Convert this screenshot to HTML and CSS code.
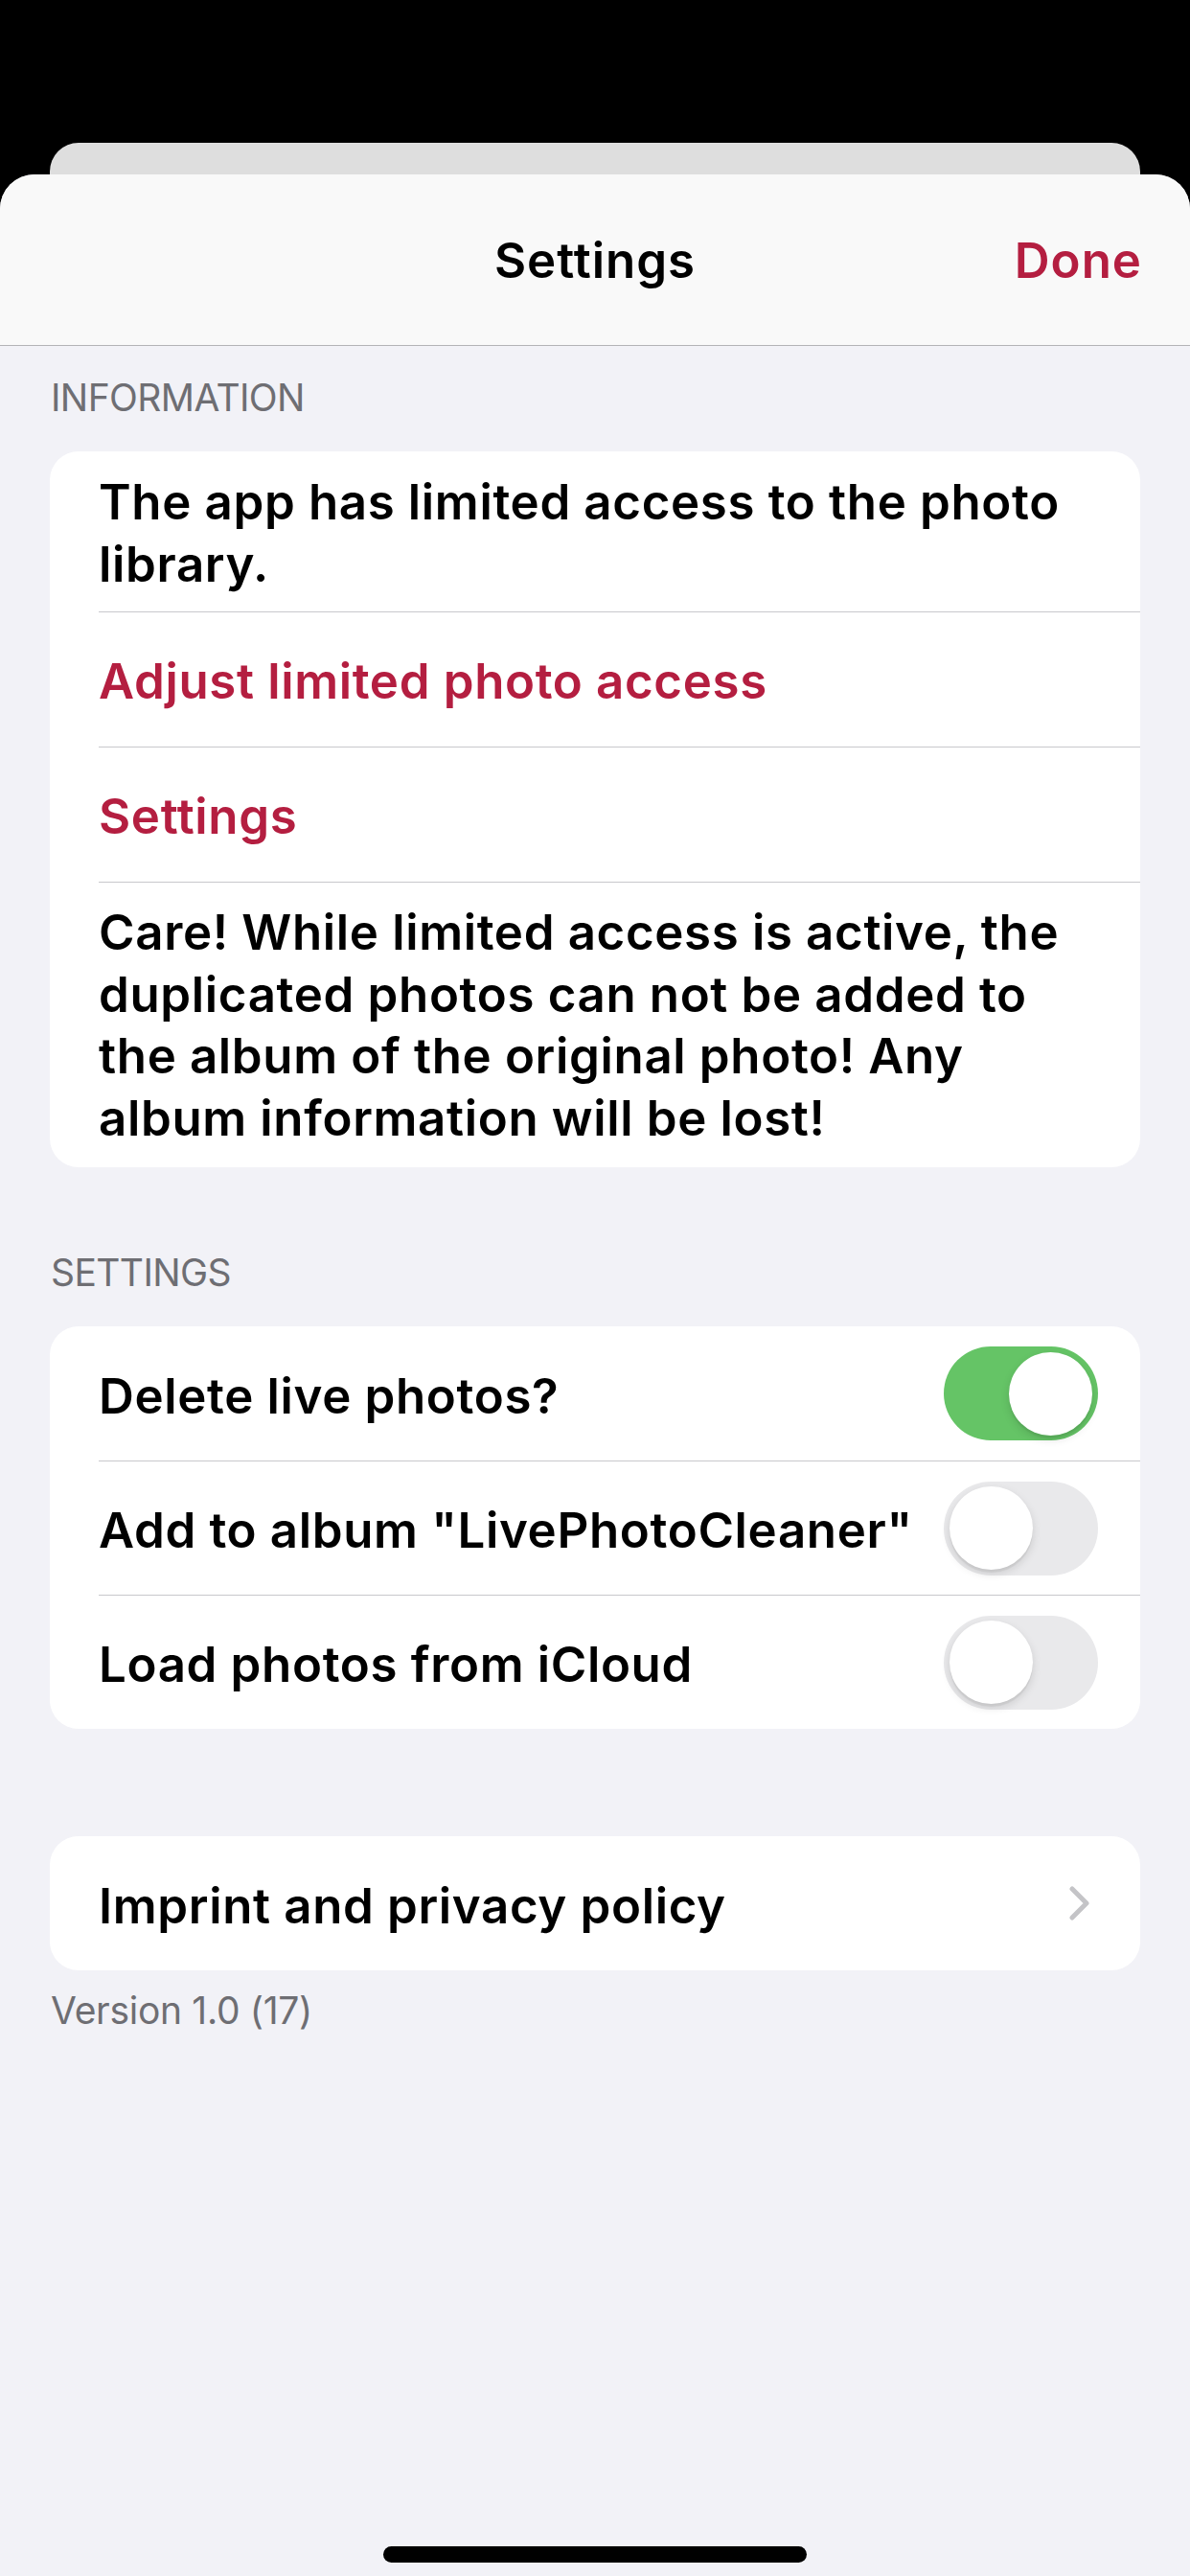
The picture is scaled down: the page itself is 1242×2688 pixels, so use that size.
FILE: index.html
```html
<!DOCTYPE html>
<html lang="en">
<head>
<meta charset="utf-8">
<title>Settings</title>
<link rel="stylesheet" href="styles.css">
</head>
<body>
<div class="screen">
  <div class="backcard"></div>
  <div class="sheet">
    <header class="navbar">
      <div class="nav-title">Settings</div>
      <div class="nav-done">Done</div>
    </header>

    <div class="section-header first">INFORMATION</div>
    <div class="card">
      <div class="row multi first-row"><div class="row-inner">The app has limited access to the photo library.</div></div>
      <div class="row"><div class="row-inner link">Adjust limited photo access</div></div>
      <div class="row"><div class="row-inner link">Settings</div></div>
      <div class="row multi last-row"><div class="row-inner">Care! While limited access is active, the duplicated photos can not be added to the album of the original photo! Any album information will be lost!</div></div>
    </div>

    <div class="section-header second">SETTINGS</div>
    <div class="card">
      <div class="row"><div class="row-inner switch-row"><span class="label">Delete live photos?</span><span class="toggle on"><span class="knob"></span></span></div></div>
      <div class="row"><div class="row-inner switch-row"><span class="label">Add to album "LivePhotoCleaner"</span><span class="toggle"><span class="knob"></span></span></div></div>
      <div class="row"><div class="row-inner switch-row"><span class="label">Load photos from iCloud</span><span class="toggle"><span class="knob"></span></span></div></div>
    </div>

    <div class="card third">
      <div class="row"><div class="row-inner chevron-row"><span class="label">Imprint and privacy policy</span>
        <svg class="chevron" width="22" height="36" viewBox="0 0 22 36"><path d="M3 3 L18 18 L3 33" fill="none" stroke="#c4c4c7" stroke-width="5" stroke-linecap="round" stroke-linejoin="round"/></svg>
      </div></div>
    </div>
    <div class="footer">Version 1.0 (17)</div>
  </div>
  <div class="home-indicator"></div>
</div>
</body>
</html>
```

FILE: styles.css
```css
html, body {
  margin: 0;
  padding: 0;
}
body {
  background: #000;
  width: 1242px;
  height: 2688px;
  overflow: hidden;
  font-family: "Inter", "Noto Sans", sans-serif;
}
.screen {
  position: relative;
  width: 1242px;
  height: 2688px;
  padding-top: 149px;
  box-sizing: border-box;
}
.backcard {
  margin: 0 52px;
  height: 33px;
  background: #dedede;
  border-radius: 30px 30px 0 0;
}
.sheet {
  height: 2506px;
  background: #f2f2f7;
  border-radius: 36px 36px 0 0;
  overflow: hidden;
}
.navbar {
  height: 178px;
  background: #f9f9f9;
  border-bottom: 1px solid #b3b3b6;
  display: flex;
  align-items: center;
  justify-content: center;
  position: relative;
}
.nav-title {
  font-size: 51px;
  font-weight: 600;
  color: #000;
  letter-spacing: 1px;
}
.nav-done {
  position: absolute;
  right: 50px;
  top: 0;
  bottom: 0;
  display: flex;
  align-items: center;
  font-size: 51px;
  font-weight: 600;
  color: #b41e40;
  letter-spacing: 1px;
}
.section-header {
  padding-left: 53px;
  font-size: 39px;
  line-height: 47px;
  color: #6e6e73;
  font-weight: 400;
  letter-spacing: -0.6px;
}
.section-header.first {
  margin-top: 30px;
  margin-bottom: 33px;
}
.section-header.second {
  margin-top: 86px;
  margin-bottom: 33px;
}
.card {
  margin: 0 52px;
  background: #fff;
  border-radius: 30px;
  overflow: hidden;
}
.card.third {
  margin-top: 112px;
}
.row {
  padding-left: 51px;
}
.row-inner {
  border-top: 1px solid #c8c8cc;
  min-height: 140px;
  box-sizing: border-box;
  padding: 39px 44px 36px 0;
  font-size: 51px;
  line-height: 65px;
  font-weight: 600;
  color: #000;
  letter-spacing: 0.65px;
}
.row:first-child .row-inner {
  border-top: none;
}
.row.multi .row-inner {
  padding-right: 60px;
}
.row.first-row .row-inner {
  padding-top: 20px;
  padding-bottom: 17px;
}
.row.last-row .row-inner {
  padding-top: 20px;
  padding-bottom: 19px;
  line-height: 64.5px;
}
.link {
  color: #b41e40;
}
.switch-row, .chevron-row {
  display: flex;
  align-items: center;
  justify-content: space-between;
  padding-top: 0;
  padding-bottom: 0;
  height: 140px;
}
.switch-row .label, .chevron-row .label {
  padding-top: 4px;
}
.chevron-row {
  padding-right: 52px;
}
.toggle {
  position: relative;
  width: 161px;
  height: 98px;
  border-radius: 49px;
  background: #e9e9eb;
  flex: none;
}
.toggle.on {
  background: #65c466;
}
.knob {
  position: absolute;
  top: 5.5px;
  left: 6px;
  width: 87px;
  height: 87px;
  border-radius: 50%;
  background: #fff;
  box-shadow: 0 4px 10px rgba(0,0,0,0.13), 0 3px 1px rgba(0,0,0,0.05);
}
.toggle.on .knob {
  left: auto;
  right: 6px;
}
.chevron {
  display: block;
  flex: none;
}
.footer {
  margin-top: 18px;
  padding-left: 53px;
  font-size: 39px;
  line-height: 47px;
  color: #6e6e73;
  letter-spacing: -0.3px;
}
.home-indicator {
  position: absolute;
  left: 400px;
  top: 2657px;
  width: 442px;
  height: 17px;
  border-radius: 9px;
  background: #000;
}
```
